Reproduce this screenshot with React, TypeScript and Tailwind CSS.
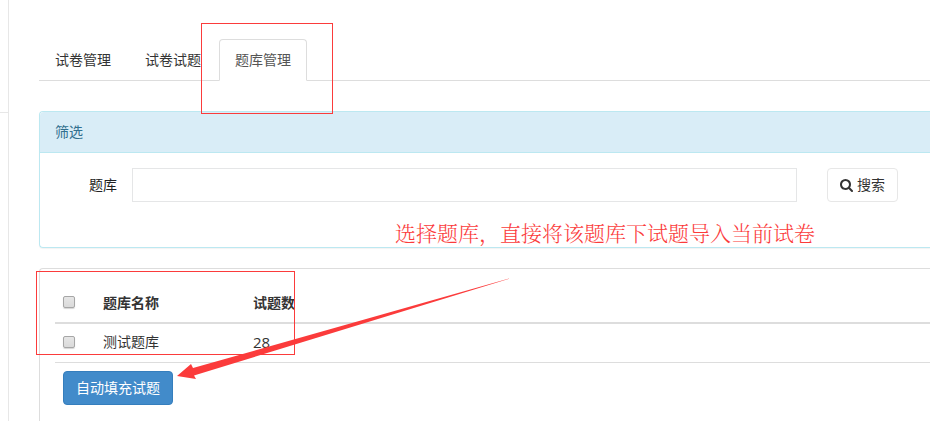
const tabs = ['试卷管理', '试卷试题', '题库管理'];
const activeTab = '题库管理';

const banks = [{ id: 1, name: '测试题库', count: 28 }];

const checkboxClass =
  'block h-3 w-3 appearance-none rounded-xs border border-[#a6a6a6] bg-linear-to-b from-[#e6e6e6] to-[#dadada] shadow-[0_1px_1px_#d5d5d5]';

const SearchIcon = () => (
  <svg className="h-[13px] w-[13px]" viewBox="64 128 1664 1664" fill="currentColor" aria-hidden="true">
    <path d="M1216 832q0-185-131.500-316.500t-316.500-131.500-316.500 131.500-131.500 316.500 131.500 316.500 316.500 131.500 316.500-131.500 131.500-316.500zm512 832q0 52-38 90t-90 38q-54 0-90-38l-343-342q-179 124-399 124-143 0-273.500-55.500t-225-150-150-225-55.500-273.500 55.500-273.500 150-225 225-150 273.500-55.500 273.500 55.500 225 150 150 225 55.500 273.500q0 220-124 399l343 343q37 37 37 90z" />
  </svg>
);

const Tabs = () => (
  <nav className="flex gap-[2px] border-b border-[#dddddd] text-[#333333]">
    {tabs.map((tab) => (
      <a
        key={tab}
        href="#"
        className={`-mb-px rounded-t border px-[15px] py-[10px] ${
          tab === activeTab ? 'border-[#dddddd] border-b-white bg-white text-[#555555]' : 'border-transparent'
        }`}
      >
        {tab}
      </a>
    ))}
  </nav>
);

const FilterPanel = () => (
  <section className="rounded-l border border-r-0 border-[#bce8f1] shadow-[0_1px_1px_#0000000d]">
    <h2 className="rounded-tl border-b border-[#bce8f1] bg-[#d9edf7] px-[15px] py-[10px] text-[#31708f]">筛选</h2>
    <form className="flex items-center px-[15px] pt-[15px] pb-[45px]">
      <label htmlFor="bank" className="w-[62px] text-right text-[#222222]">题库</label>
      <input id="bank" type="text" className="ml-[15px] h-[34px] min-w-0 flex-1 border border-[#e5e6e7] bg-white px-3 outline-none" />
      <button type="button" className="mr-[17px] ml-[30px] flex h-[34px] items-center gap-1 rounded border border-[#e7e7e7] bg-white px-3">
        <SearchIcon />
        搜索
      </button>
    </form>
  </section>
);

const BankTable = () => (
  <section className="rounded-tl border border-r-0 border-b-0 border-[#dddddd] py-[15px] pl-[15px]">
    <table className="w-full table-fixed border-collapse text-left">
      <thead>
        <tr className="border-b-2 border-[#dddddd]">
          <th className="w-10 px-2 pt-2 pb-[10px]">
            <input type="checkbox" aria-label="全选" className={checkboxClass} />
          </th>
          <th className="w-[150px] px-2 py-[9px] font-bold">题库名称</th>
          <th className="px-2 py-[9px] font-bold">试题数</th>
        </tr>
      </thead>
      <tbody>
        {banks.map((bank) => (
          <tr key={bank.id} className="border-b border-[#dddddd]">
            <td className="px-2 pt-2 pb-[10px]">
              <input type="checkbox" aria-label={bank.name} className={checkboxClass} />
            </td>
            <td className="px-2 pt-2 pb-[10px]">{bank.name}</td>
            <td className="px-2 pt-2 pb-[10px] text-[15px]">{bank.count}</td>
          </tr>
        ))}
      </tbody>
    </table>
    <div className="p-2">
      <button type="button" className="h-[34px] rounded border border-[#357ebd] bg-[#428bca] px-3 text-white">
        自动填充试题
      </button>
    </div>
  </section>
);

// Red marks that guide the reader through the steps
const Annotations = () => (
  <div className="pointer-events-none absolute inset-0">
    <div className="absolute top-[23px] left-[201px] h-[91px] w-[132px] border border-[#fb3b3b]" />
    <div className="absolute top-[271px] left-[36px] h-[84px] w-[259px] border border-[#fb3b3b]" />
    <p className="absolute top-[217px] left-[395px] font-['Noto_Serif_CJK_SC','Noto_Sans_CJK_SC',serif] text-[21px] leading-[30px] font-light whitespace-nowrap text-[#fb3b3b]">
      选择题库，直接将该题库下试题导入当前试卷
    </p>
    <svg className="absolute top-[270px] left-[170px]" width="350" height="120" viewBox="170 270 350 120" fill="#fb3b3b">
      <path d="M177 376 L191 364 L193 368 L513 277.500 L194 375.500 L196 379 Z" />
    </svg>
  </div>
);

const App = () => {
  return (
    <div className="relative flex min-h-screen overflow-hidden bg-white font-['Open_Sans','Noto_Sans_CJK_SC',sans-serif] text-sm leading-5 text-[#333333]">
      <aside className="w-[9px] shrink-0 border-r border-[#e7e7e7]">
        <div className="h-[113px] border-b border-[#e7e7e7]" />
      </aside>
      <main className="min-w-0 flex-1 pt-[39px] pl-[30px]">
        <Tabs />
        <div className="mt-[30px] flex flex-col gap-5">
          <FilterPanel />
          <BankTable />
        </div>
      </main>
      <Annotations />
    </div>
  );
};

export default App;
